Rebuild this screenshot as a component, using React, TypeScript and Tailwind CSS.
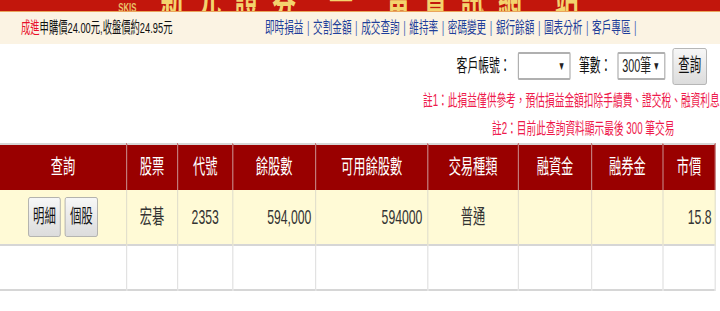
const navLinks = ["即時損益", "交割金額", "成交查詢", "維持率", "密碼變更", "銀行餘額", "圖表分析", "客戶專區"];

const columns = [
  { label: "查詢", w: "w-[211px]" },
  { label: "股票", w: "w-[85px]" },
  { label: "代號", w: "w-[92px]" },
  { label: "餘股數", w: "w-[138px]" },
  { label: "可用餘股數", w: "w-[187px]" },
  { label: "交易種類", w: "w-[151px]" },
  { label: "融資金", w: "w-[122px]" },
  { label: "融券金", w: "w-[119px]" },
  { label: "市價", w: "w-[87px]" },
];

function GrayButton({ children, className = "" }: { children: React.ReactNode; className?: string }) {
  return (
    <button
      className={`rounded-[3px] border border-[#a3a3a3] bg-gradient-to-b from-[#f7f7f7] to-[#dcdcdc] text-[19px] text-[#111] ${className}`}
    >
      {children}
    </button>
  );
}

function FakeSelect({ value, className = "" }: { value?: string; className?: string }) {
  return (
    <div
      className={`h-[28px] flex items-center justify-between rounded-[2px] border-2 border-[#b0b0b0] bg-white pl-[6px] pr-[7px] text-[18px] text-[#222] ${className}`}
    >
      <span>{value ?? ""}</span>
      <span className="text-[12px]">▼</span>
    </div>
  );
}

export default function App() {
  return (
    <div className="w-[720px] h-[311px] overflow-hidden bg-white">
      {/* the whole page is drawn 1200px wide and squeezed to 720 */}
      <div className="w-[1200px] origin-top-left scale-x-[0.6] font-['Liberation_Sans','Noto_Sans_CJK_TC',sans-serif]">
        {/* banner strip */}
        <div className="h-[11px] bg-[#c2160c] overflow-hidden flex items-end">
          <span className="ml-[197px] text-[13px] leading-[13px] text-[#e9c26a] font-bold translate-y-[3px]">SKIS</span>
          <span className="ml-[40px] text-[40px] leading-[40px] text-[#f3d36e] font-bold whitespace-nowrap translate-y-[9px] tracking-[22px]">
            新光證券 一 留資訊網 站
          </span>
        </div>
        <div className="h-px bg-[#eaa45c]" />
        <div className="h-[32px] bg-[#fbf3e3] flex items-center whitespace-nowrap">
          <span className="ml-[35px] text-[15.5px] text-[#111]">
            <span className="text-[#e8102a]">成進</span>申購價24.00元,收盤價約24.95元
          </span>
          <nav className="ml-auto mr-[133px] text-[16px] text-[#1f3f9a]">
            {navLinks.map((l) => (
              <span key={l}>
                {l}
                <span className="mx-[6px] text-[#4a6ab8]">|</span>
              </span>
            ))}
          </nav>
        </div>

        {/* query form */}
        <div className="h-[99px] flex flex-col">
          <div className="mt-[4px] h-[36px] flex items-center justify-end pr-[22px] text-[18px] text-[#111]">
            <span>客戶帳號：</span>
            <FakeSelect className="ml-[12px] w-[88px]" />
            <span className="ml-[14px]">筆數：</span>
            <FakeSelect className="ml-[10px] w-[80px]" value="300筆" />
            <GrayButton className="ml-[12px] h-[37px] w-[57px]">查詢</GrayButton>
          </div>
          <div className="whitespace-nowrap text-[16.2px] text-[#ee1a4c]">
            <div className="ml-[705px] mt-[7px] leading-[18px]">註1：此損益僅供參考，預估損益金額扣除手續費、證交稅、融資利息</div>
            <div className="ml-[820px] mt-[10px] leading-[18px]">註2：目前此查詢資料顯示最後 300 筆交易</div>
          </div>
        </div>

        {/* holdings table */}
        <table className="w-[1192px] table-fixed border-collapse border-t-2 border-[#d6d6d6]">
          <colgroup>
            {columns.map((c) => (
              <col key={c.label} className={c.w} />
            ))}
          </colgroup>
          <thead>
            <tr className="h-[46px] bg-[#990000]">
              {columns.map((c) => (
                <th
                  key={c.label}
                  className="border-x-2 border-[#c27a7a] text-[20.4px] font-normal text-white first:border-l-0"
                >
                  {c.label}
                </th>
              ))}
            </tr>
          </thead>
          <tbody className="text-[20.4px] text-[#333]">
            <tr className="h-[55px] bg-[#fffad6] border-b-2 border-[#d6d6d6]">
              <td className="border-x-2 border-[#e3e0cc] first:border-l-0 text-center">
                <GrayButton className="h-[40px] w-[54px]">明細</GrayButton>
                <GrayButton className="ml-[7px] h-[40px] w-[55px]">個股</GrayButton>
              </td>
              <td className="border-x-2 border-[#e3e0cc] text-center">宏碁</td>
              <td className="border-x-2 border-[#e3e0cc] text-center">2353</td>
              <td className="border-x-2 border-[#e3e0cc] text-right pr-[6px]">594,000</td>
              <td className="border-x-2 border-[#e3e0cc] text-right pr-[8px]">594000</td>
              <td className="border-x-2 border-[#e3e0cc] text-center">普通</td>
              <td className="border-x-2 border-[#e3e0cc]" />
              <td className="border-x-2 border-[#e3e0cc]" />
              <td className="border-x-2 border-[#e3e0cc] text-right pr-[5px]">15.8</td>
            </tr>
            <tr className="h-[45px] bg-white border-b-2 border-[#d6d6d6]">
              {columns.map((c, i) => (
                <td key={c.label} className={`border-x-2 border-[#e2e2e2] ${i === 0 ? "border-l-0" : ""}`} />
              ))}
            </tr>
          </tbody>
        </table>
      </div>
    </div>
  );
}
